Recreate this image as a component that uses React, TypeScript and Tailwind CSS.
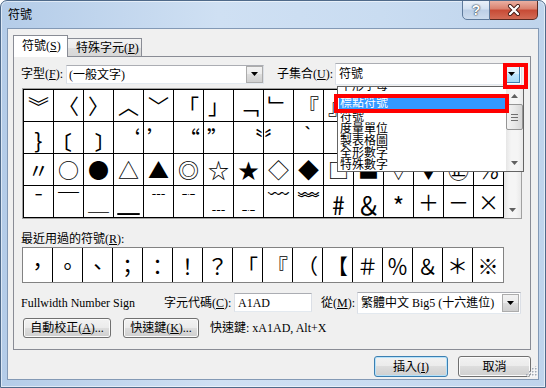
import React from 'react';

const GRID: string[][] = [
  ['︾', '〈', '〉', '︿', '﹀', '「', '」', '﹁', '﹂', '『', '』', '﹃', '﹄', '﹙', '﹚', '﹛'],
  ['﹜', '﹝', '﹞', '‘', '’', '“', '”', '〝', '〞', '‵', '′', '＃', '＆', '＊', '※', '§'],
  ['〃', '○', '●', '△', '▲', '◎', '☆', '★', '◇', '◆', '□', '■', '▽', '▼', '㊣', '℅'],
  ['¯', '￣', '＿', 'ˍ', '﹉', '﹊', '﹍', '﹎', '﹋', '﹌', '﹟', '﹠', '﹡', '＋', '－', '×'],
];

const RECENT = ['，', '。', '、', '；', '：', '！', '？', '「', '『', '（', '【', '＃', '％', '＆', '＊', '※'];

// paired quote marks lean against the shared cell edge
const EDGE: Record<string, string> = {
  '‘': 'justify-end pr-[3px]',
  '“': 'justify-end pr-[3px]',
  '〝': 'justify-end',
  '’': 'justify-start pl-[3px]',
  '”': 'justify-start pl-[3px]',
  '〞': 'justify-start',
};

const GROW: Record<string, string> = {
  '﹜': 'scale-[1.45]',
  '﹝': 'scale-[1.45]',
  '﹞': 'scale-[1.45]',
  '﹟': 'scale-[1.4]',
  '﹠': 'scale-[1.4]',
  '﹡': 'scale-[1.4]',
  'ˍ': 'scale-x-[4] scale-y-[1.5] -translate-y-[3px]',
};

const SUBSETS = ['符號', '度量單位', '製表格圖', '全形數字', '特殊數字'];

function Tri({ up = false, className = '' }: { up?: boolean; className?: string }) {
  return (
    <svg width="7" height="4" viewBox="0 0 7 4" className={className}>
      <polygon points={up ? '0,4 7,4 3.5,0' : '0,0 7,0 3.5,4'} fill="currentColor" />
    </svg>
  );
}

function DropButton({ hot = false }: { hot?: boolean }) {
  return (
    <div
      className={
        hot
          ? 'flex h-full w-[17px] items-center justify-center border border-[#3c7fb1] bg-[linear-gradient(#eaf6fd,#d9f0fc_49%,#bee6fd_50%,#a7d9f5)]'
          : 'flex h-full w-[17px] items-center justify-center border border-[#acacac] bg-[linear-gradient(#f2f2f2,#ebebeb_49%,#dddddd_50%,#cfcfcf)]'
      }
    >
      <Tri />
    </div>
  );
}

function Button({ children, className = '', primary = false }: { children: React.ReactNode; className?: string; primary?: boolean }) {
  return (
    <div
      className={`flex items-center justify-center rounded-[3px] border leading-[12px] bg-[linear-gradient(#f2f2f2,#ebebeb_49%,#dddddd_50%,#cfcfcf)] ${
        primary ? 'border-[#3c7fb1] shadow-[inset_0_0_0_1px_#b6e2fa]' : 'border-[#707070] shadow-[inset_0_0_0_1px_#fbfbfb]'
      } ${className}`}
    >
      {children}
    </div>
  );
}

function Scrollbar({ thumb = false }: { thumb?: boolean }) {
  return (
    <div className="flex w-[17px] flex-col bg-[linear-gradient(90deg,#e6e6e6,#f5f5f5_30%,#f5f5f5_70%,#e9e9e9)]">
      <div className="flex h-[17px] items-center justify-center text-[#606060]">
        <Tri up />
      </div>
      {thumb && (
        <div className="flex h-[26px] flex-col items-center justify-center gap-[2px] rounded-[2px] border border-[#959595] bg-[linear-gradient(90deg,#f3f3f3,#e8e8e8_50%,#d6d6d6)]">
          <div className="h-px w-[7px] bg-[#6f6f6f]" />
          <div className="h-px w-[7px] bg-[#6f6f6f]" />
          <div className="h-px w-[7px] bg-[#6f6f6f]" />
        </div>
      )}
      <div className="flex-1" />
      <div className="flex h-[17px] items-center justify-center text-[#606060]">
        <Tri />
      </div>
    </div>
  );
}

export default function App() {
  return (
    <div className="relative h-[388px] w-[546px] overflow-hidden rounded-t-[7px] border border-[#4f6a8a] bg-[linear-gradient(90deg,#b4cce8,#cfe0f3_40%,#c9dcf1_70%,#bfd4ec)] font-['Liberation_Serif','Noto_Sans_CJK_TC',serif] text-[12px] text-black shadow-[inset_0_0_0_1px_rgba(255,255,255,0.55)]">
      {/* title bar */}
      <div className="flex h-[27px] items-start justify-between pl-[7px] pr-[7px]">
        <span className="mt-[7px] leading-[12px] font-['Noto_Sans_CJK_TC',sans-serif]">符號</span>
        <div className="-mt-px flex">
          <div className="flex h-[20px] w-[28px] items-center justify-center rounded-bl-[5px] border border-[#5f7b9c] bg-[linear-gradient(#eaf1f9,#d3e1f1_45%,#bccfe6_50%,#cddcee)] font-['Liberation_Sans',sans-serif] text-[14px] font-bold text-white [text-shadow:0_0_2px_#1d2b3a,0_0_1px_#1d2b3a]">
            ?
          </div>
          <div className="flex h-[20px] w-[48px] items-center justify-center rounded-br-[5px] border border-l-0 border-[#5a2a22] bg-[linear-gradient(#eab0a2,#d9806d_45%,#c74a35_50%,#d26b55)]">
            <svg width="14" height="12" viewBox="0 0 14 12">
              <path d="M3 2 L11 10 M11 2 L3 10" stroke="#3b1510" strokeWidth="4" strokeLinecap="round" />
              <path d="M3 2 L11 10 M11 2 L3 10" stroke="#ffffff" strokeWidth="2.4" strokeLinecap="round" />
            </svg>
          </div>
        </div>
      </div>

      {/* client area */}
      <div className="relative mx-[6px] flex h-[352px] flex-col border border-[#8399b5] bg-[#f0f0f0]">
        {/* tabs */}
        <div className="ml-[5px] mt-[6px] flex h-[21px] items-end">
          <div className="relative z-10 -mb-px flex h-[22px] w-[55px] items-center border border-b-0 border-[#898c95] bg-white pl-[8px] pb-[2px] leading-[12px]">
            符號(<u>S</u>)
          </div>
          <div className="flex h-[18px] w-[74px] items-center border border-l-0 border-b-0 border-[#898c95] bg-[linear-gradient(#f3f3f3,#ebebeb_50%,#dedede_51%,#d7d7d7)] pl-[8px] leading-[12px]">
            特殊字元(<u>P</u>)
          </div>
        </div>

        {/* tab page */}
        <div className="ml-[5px] flex h-[294px] w-[518px] flex-col border border-[#898c95] bg-[#f0f0f0] pl-[7px]">
          <div className="mt-[6px] flex h-[22px] items-center">
            <span className="w-[45px] leading-[12px]">字型(<u>F</u>):</span>
            <div className="flex h-[19px] w-[198px] border border-[#abadb3] border-b-[#e3e9ef] border-x-[#dbdfe6] bg-white">
              <span className="flex-1 pl-[2px] pt-[3px] leading-[12px]">(一般文字)</span>
              <DropButton />
            </div>
            <span className="ml-[13px] w-[58px] leading-[12px]">子集合(<u>U</u>):</span>
            <div className="flex h-[22px] w-[187px] border border-[#abadb3] border-b-[#e3e9ef] border-x-[#dbdfe6] bg-white">
              <span className="flex-1 pl-[3px] pt-[4px] leading-[12px]">符號</span>
              <div className="py-[1px] pr-[1px]">
                <DropButton hot />
              </div>
            </div>
          </div>

          {/* symbol grid */}
          <div className="ml-px mt-[3px] flex w-[500px] border border-[#a0a0a0] bg-white">
            <div className="grid grid-cols-[repeat(16,30px)] border-l border-t border-black">
              {GRID.flat().map((s, i) => (
                <div
                  key={i}
                  className={`flex h-[32px] items-center border-b border-r border-black font-['Noto_Sans_CJK_TC',sans-serif] text-[21px] leading-none ${EDGE[s] ?? 'justify-center'}`}
                >
                  {GROW[s] ? <span className={`inline-block ${GROW[s]}`}>{s}</span> : s}
                </div>
              ))}
            </div>
            <Scrollbar />
          </div>

          <div className="mt-[14px] leading-[12px]">最近用過的符號(<u>R</u>):</div>
          <div className="ml-px mt-[2px] flex h-[36px] w-[482px] border border-[#828282] bg-white">
            {RECENT.map((s, i) => (
              <div
                key={i}
                className={`flex w-[30px] items-center justify-center font-['Noto_Sans_CJK_TC',sans-serif] text-[21px] leading-none ${i < 15 ? 'border-r border-black' : ''}`}
              >
                {s}
              </div>
            ))}
          </div>

          <div className="mt-[9px] flex h-[21px] items-center">
            <span className="w-[143px] leading-[12px]">Fullwidth Number Sign</span>
            <span className="w-[70px] leading-[12px]">字元代碼(<u>C</u>):</span>
            <div className="flex h-[19px] w-[78px] items-center border border-[#abadb3] border-b-[#e3e9ef] border-x-[#dbdfe6] bg-white pl-[3px] leading-[12px]">
              A1AD
            </div>
            <span className="ml-[9px] w-[36px] leading-[12px]">從(<u>M</u>):</span>
            <div className="flex h-[22px] w-[164px] border border-[#abadb3] border-b-[#e3e9ef] border-x-[#dbdfe6] bg-white">
              <span className="flex-1 pl-[3px] pt-[4px] leading-[12px]">繁體中文 Big5 (十六進位)</span>
              <div className="py-[1px] pr-[1px]">
                <DropButton />
              </div>
            </div>
          </div>

          <div className="mt-[5px] flex h-[20px] items-center">
            <Button className="ml-[2px] h-[20px] w-[88px]">
              自動校正(<u>A</u>)...
            </Button>
            <Button className="ml-[12px] h-[20px] w-[76px]">
              快速鍵(<u>K</u>)...
            </Button>
            <span className="ml-[11px] leading-[12px]">快速鍵: xA1AD, Alt+X</span>
          </div>
        </div>

        {/* dialog buttons */}
        <div className="mt-[6px] flex justify-end gap-[10px] pr-[7px]">
          <Button primary className="h-[21px] w-[74px]">
            插入(<u>I</u>)
          </Button>
          <Button className="h-[21px] w-[73px]">取消</Button>
        </div>

        {/* size grip */}
        <svg className="absolute bottom-[2px] right-[1px]" width="11" height="11" viewBox="0 0 11 11">
          {[
            [9, 1], [9, 4], [6, 4], [9, 7], [6, 7], [3, 7], [9, 10], [6, 10], [3, 10], [0, 10],
          ].map(([x, y], i) => (
            <g key={i}>
              <rect x={x + 1} y={y - 1} width="1.5" height="1.5" fill="#ffffff" />
              <rect x={x} y={y - 2} width="1.5" height="1.5" fill="#a0a8b4" />
            </g>
          ))}
        </svg>
      </div>

      {/* open subset list */}
      <div className="absolute left-[336px] top-[85px] flex h-[86px] w-[187px] border border-[#646464] bg-white">
        <div className="flex-1 overflow-hidden">
          <div className="-mt-[7px] h-[12px] pl-[2px] leading-[12px]">半形字母</div>
          <div className="mx-px mt-[4px] h-[15px] bg-[#3399ff] pl-px leading-[15px] text-white">標點符號</div>
          {SUBSETS.map((s) => (
            <div key={s} className="h-[12px] pl-[2px] leading-[12px]">
              {s}
            </div>
          ))}
        </div>
        <Scrollbar thumb />
      </div>

      {/* red call-outs */}
      <div className="absolute left-[502px] top-[62px] h-[26px] w-[25px] border-[4px] border-[#ff0000]" />
      <div className="absolute left-[333px] top-[93px] h-[19px] w-[175px] border-[4px] border-[#ff0000]" />
    </div>
  );
}
